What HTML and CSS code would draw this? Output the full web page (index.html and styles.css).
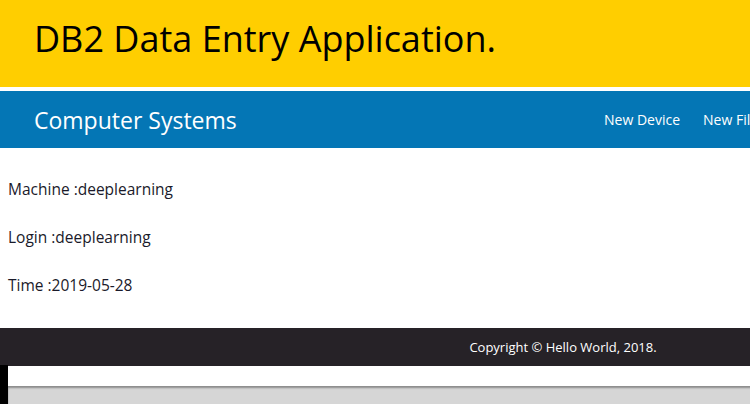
FILE: index.html
```html
<!DOCTYPE html>
<html>
<head>
<meta charset="utf-8">
<link rel="stylesheet" href="styles.css">
</head>
<body>
<div class="page">
  <header class="banner"><h1 class="title">DB2 Data Entry Application.</h1></header>
  <nav class="navbar">
    <span class="brand">Computer Systems</span>
    <ul class="links">
      <li>New Device</li>
      <li>New Filter</li>
    </ul>
  </nav>
  <main class="content">
    <p>Machine :deeplearning</p>
    <p>Login :deeplearning</p>
    <p>Time :2019-05-28</p>
  </main>
  <footer class="footer">Copyright © Hello World, 2018.</footer>
  <div class="bottom">
    <div class="strip"></div>
    <div class="rest">
      <div class="white"></div>
      <div class="gray"></div>
    </div>
  </div>
</div>
</body>
</html>
```
FILE: styles.css
```css
html, body { margin: 0; padding: 0; overflow: hidden; height: 404px; }
body { font-family: "Open Sans", "Noto Sans", sans-serif; background: #fff; }
.page { width: 1126px; }
.banner { background: #ffce00; height: 87px; display: flex; align-items: center; margin-bottom: 4px; }
.title { margin: 0 0 0 34px; font-weight: 400; font-size: 36px; color: #000; line-height: 1; position: relative; top: -5px; }
.navbar { background: #0476b5; height: 57px; display: flex; align-items: center; padding: 0 0 0 34px; }
.brand { color: #fff; font-size: 23px; flex: 0 0 570px; }
.links { list-style: none; margin: 0; padding: 0; display: flex; gap: 23px; color: #fff; font-size: 14px; }
.content { padding: 32px 8px 18px; height: 130px; }
.content p { margin: 0 0 29px; font-size: 15.5px; color: #1a1a2a; line-height: 19px; }
.footer { background: #262227; color: #fff; height: 38px; display: flex; align-items: center; justify-content: center; font-size: 13px; }
.bottom { display: flex; height: 40px; }
.strip { width: 8px; background: #000; margin-top: -1px; }
.rest { flex: 1; display: flex; flex-direction: column; }
.white { height: 20px; background: #fff; }
.gray { flex: 1; background: #d6d6d6; box-shadow: inset 0 2px 2px rgba(0,0,0,0.35); }
```
